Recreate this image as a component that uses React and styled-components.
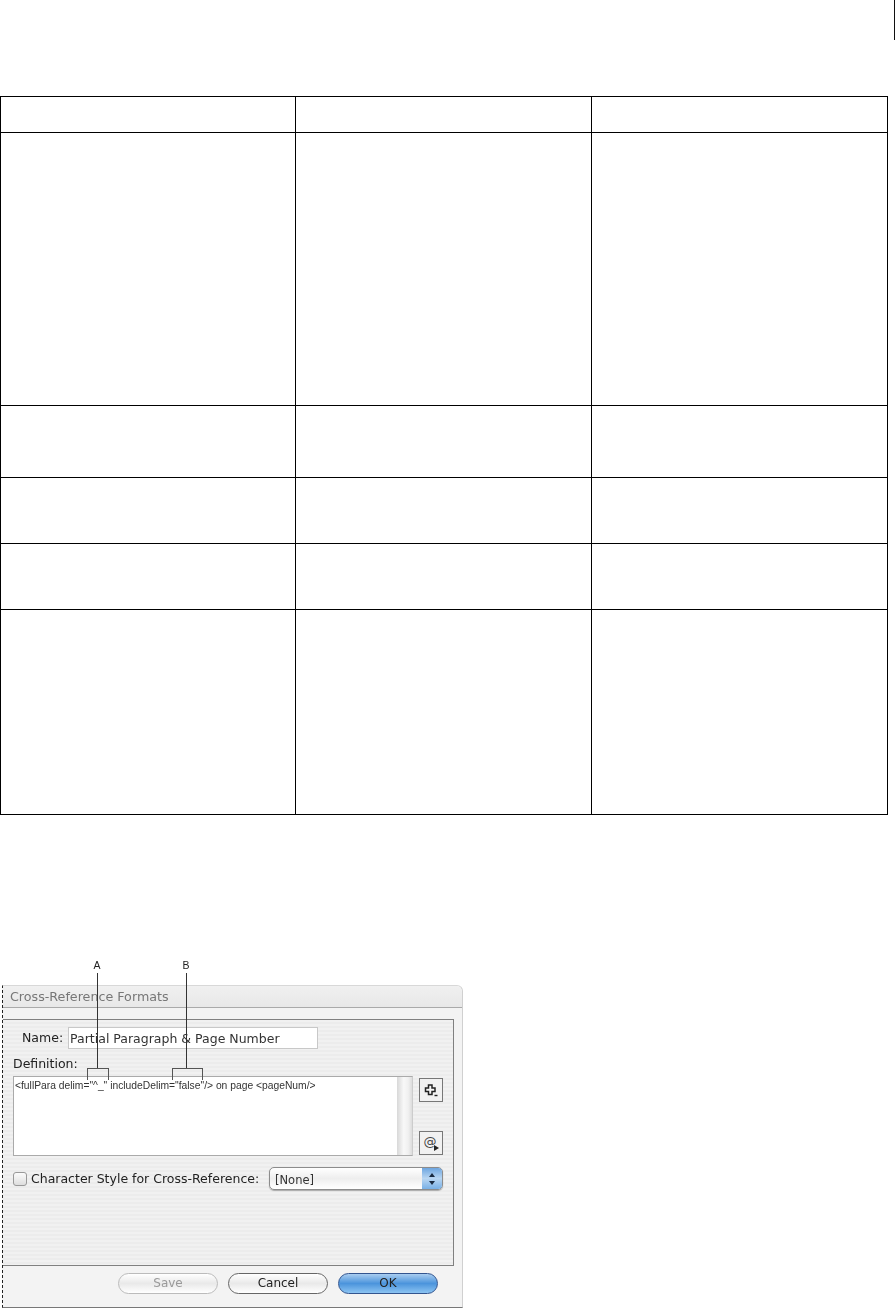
import React from 'react';
import styled, { createGlobalStyle } from 'styled-components';

const GlobalStyle = createGlobalStyle`
    html, body {
        margin: 0;
        padding: 0;
        background: #fff;
    }
    body {
        font-family: "DejaVu Sans", "Liberation Sans", sans-serif;
        color: #222;
    }
`;

const Page = styled.div`
    width: 895px;
    height: 1308px;
    overflow: hidden;
    background: #fff;
`;

const PageHeader = styled.div`
    height: 96px;
    display: flex;
    justify-content: flex-end;
    align-items: flex-start;
`;

const PageTick = styled.div`
    width: 1px;
    height: 40px;
    background: #111;
`;

const Table = styled.div`
    width: 888px;
    box-sizing: border-box;
    border: 1px solid #000;
    display: flex;
    flex-direction: column;
`;

const Row = styled.div`
    display: grid;
    grid-template-columns: 295px 296px 1fr;
    height: ${(p) => p.$height}px;
    box-sizing: border-box;
    border-bottom: ${(p) => (p.$last ? 'none' : '1px solid #000')};
`;

const Cell = styled.div`
    border-right: ${(p) => (p.$last ? 'none' : '1px solid #000')};
`;

const Figure = styled.div`
    position: relative;
    margin-top: 144px;
    width: 470px;
    height: 349px;
    filter: blur(0.45px);
`;

const CalloutLabel = styled.span`
    position: absolute;
    top: 1px;
    left: ${(p) => p.$x}px;
    font-family: "Liberation Sans", Arial, sans-serif;
    font-size: 10.5px;
    line-height: 10px;
    color: #222;
    transform: translateX(-50%);
`;

const CalloutLine = styled.div`
    position: absolute;
    top: 14px;
    left: ${(p) => p.$x}px;
    width: 1px;
    height: 96px;
    background: #333;
    z-index: 2;
`;

const CalloutBracket = styled.div`
    position: absolute;
    top: 109px;
    left: ${(p) => p.$x}px;
    width: ${(p) => p.$w}px;
    height: 12px;
    box-sizing: border-box;
    border: 1px solid #555;
    border-bottom: none;
    z-index: 2;
`;

const Window = styled.div`
    position: absolute;
    left: 2px;
    top: 26px;
    width: 461px;
    height: 323px;
    box-sizing: border-box;
    background: #f3f3f3;
    border-top: 1px solid #d8d8d8;
    border-right: 1px solid #d0d0d0;
    border-bottom: 1px solid #777;
    border-left: 1px dashed #222;
    border-top-right-radius: 6px;
    display: flex;
    flex-direction: column;
`;

const TitleBar = styled.div`
    height: 22px;
    flex: none;
    box-sizing: border-box;
    padding-left: 7px;
    border-bottom: 1px solid #aaa;
    background: linear-gradient(#f0f0f0, #e8e8e8);
    border-top-right-radius: 6px;
    font-size: 12.7px;
    line-height: 21px;
    color: #777;
`;

const Panel = styled.div`
    flex: none;
    height: 247px;
    width: 451px;
    margin-top: 11px;
    box-sizing: border-box;
    border: 1px solid #808080;
    border-left: none;
    background: repeating-linear-gradient(#f1f1f1 0, #f1f1f1 2px, #ececec 2px, #ececec 4px);
    padding: 7px 9px 0 10px;
    display: flex;
    flex-direction: column;
`;

const NameRow = styled.div`
    display: flex;
    align-items: center;
    height: 22px;
    padding-left: 9px;
    gap: 5px;
`;

const FieldLabel = styled.label`
    font-size: 12.5px;
    line-height: 16px;
    color: #222;
`;

const NameInput = styled.div`
    width: 250px;
    height: 22px;
    box-sizing: border-box;
    background: #fff;
    border: 1px solid #c8c8c8;
    padding-left: 1px;
    font-size: 12.5px;
    line-height: 21px;
    color: #333;
    white-space: nowrap;
`;

const DefinitionLabel = styled(FieldLabel)`
    display: block;
    margin-top: 7px;
`;

const DefinitionRow = styled.div`
    display: flex;
    margin-top: 4px;
    gap: 6px;
`;

const DefinitionBox = styled.div`
    width: 400px;
    height: 80px;
    box-sizing: border-box;
    background: #fff;
    border: 1px solid #aaa;
    border-right: 1px solid #ccc;
    display: flex;
    justify-content: space-between;
`;

const DefinitionText = styled.div`
    font-family: "Liberation Sans", Arial, sans-serif;
    font-size: 10.3px;
    line-height: 12px;
    padding: 3px 0 0 1px;
    color: #333;
    white-space: nowrap;
`;

const ScrollTrack = styled.div`
    width: 15px;
    background: linear-gradient(90deg, #d8d8d8, #f8f8f8 45%, #f0f0f0 75%, #dcdcdc);
`;

const SideButtons = styled.div`
    display: flex;
    flex-direction: column;
    justify-content: space-between;
    height: 77px;
    margin-top: 2px;
`;

const IconButton = styled.div`
    position: relative;
    width: 24px;
    height: 24px;
    box-sizing: border-box;
    border: 1px solid #777;
    background: #f1f1f1;
    display: flex;
    align-items: center;
    justify-content: center;
`;

const AtGlyph = styled.span`
    font-size: 13px;
    line-height: 20px;
    color: #444;
    margin: -2px 2px 0 0;
`;

const AtMarker = styled.svg`
    position: absolute;
    right: 3px;
    bottom: 3px;
`;

const StyleRow = styled.div`
    display: flex;
    align-items: center;
    margin-top: 11px;
    height: 23px;
`;

const Checkbox = styled.div`
    width: 14px;
    height: 14px;
    box-sizing: border-box;
    border: 1px solid #999;
    border-radius: 3px;
    background: linear-gradient(#fbfbfb, #dedede);
    margin-right: 4px;
`;

const StyleLabel = styled(FieldLabel)`
    white-space: nowrap;
    width: 238px;
`;

const Select = styled.div`
    width: 174px;
    height: 23px;
    box-sizing: border-box;
    border: 1px solid #8c8c8c;
    border-radius: 5px;
    background: linear-gradient(#fff, #eee 50%, #fff);
    display: flex;
    justify-content: space-between;
    overflow: hidden;
    box-shadow: 0 1px 1px #aaa;
`;

const SelectValue = styled.span`
    padding-left: 5px;
    font-size: 11.5px;
    line-height: 25px;
    color: #333;
`;

const SelectArrows = styled.div`
    width: 20px;
    background: linear-gradient(#6ea6e0, #b9d6f2 50%, #78b0e6);
    display: flex;
    align-items: center;
    justify-content: center;
`;

const ButtonBar = styled.div`
    display: flex;
    margin-top: 7px;
    padding-left: 115px;
    gap: 10px;
`;

const PillButton = styled.div`
    width: 100px;
    height: 21px;
    box-sizing: border-box;
    border-radius: 11px;
    border: 1px solid ${(p) => (p.$primary ? '#33558f' : p.$disabled ? '#bbb' : '#666')};
    background: ${(p) =>
        p.$primary
            ? 'linear-gradient(#a9cdf0, #4b94dc 50%, #8cc4f2)'
            : 'linear-gradient(#fff, #e9e9e9 50%, #fff)'};
    color: ${(p) => (p.$disabled ? '#999' : '#222')};
    font-size: 12px;
    line-height: 19px;
    text-align: center;
`;

const rows = [36, 273, 72, 66, 66, 204];

const App = () => {
    return (
        <Page>
            <GlobalStyle />
            <PageHeader>
                <PageTick />
            </PageHeader>
            <Table>
                {rows.map((height, i) => (
                    <Row key={i} $height={height} $last={i === rows.length - 1}>
                        <Cell />
                        <Cell />
                        <Cell $last />
                    </Row>
                ))}
            </Table>
            <Figure>
                <Window>
                    <TitleBar>Cross-Reference Formats</TitleBar>
                    <Panel>
                        <NameRow>
                            <FieldLabel>Name:</FieldLabel>
                            <NameInput>Partial Paragraph &amp; Page Number</NameInput>
                        </NameRow>
                        <DefinitionLabel>Definition:</DefinitionLabel>
                        <DefinitionRow>
                            <DefinitionBox>
                                <DefinitionText>
                                    {'<fullPara delim="^_" includeDelim="false"/> on page <pageNum/>'}
                                </DefinitionText>
                                <ScrollTrack />
                            </DefinitionBox>
                            <SideButtons>
                                <IconButton>
                                    <svg width="16" height="16" viewBox="0 0 16 16">
                                        <path d="M5.5 3h3.5v3h3v3.5H9v3H5.5v-3h-3V6h3z" fill="#f4f4f4" stroke="#222" strokeWidth="1.5" />
                                        <path d="M11.5 13.5h3" stroke="#222" strokeWidth="1.4" />
                                    </svg>
                                </IconButton>
                                <IconButton>
                                    <AtGlyph>@</AtGlyph>
                                    <AtMarker width="5" height="6" viewBox="0 0 5 6">
                                        <path d="M0 0l5 3-5 3z" fill="#222" />
                                    </AtMarker>
                                </IconButton>
                            </SideButtons>
                        </DefinitionRow>
                        <StyleRow>
                            <Checkbox />
                            <StyleLabel>Character Style for Cross-Reference:</StyleLabel>
                            <Select>
                                <SelectValue>[None]</SelectValue>
                                <SelectArrows>
                                    <svg width="8" height="14" viewBox="0 0 8 14" fill="#1a2a40">
                                        <path d="M4 1l3 4H1zM4 13l3-4H1z" />
                                    </svg>
                                </SelectArrows>
                            </Select>
                        </StyleRow>
                    </Panel>
                    <ButtonBar>
                        <PillButton $disabled>Save</PillButton>
                        <PillButton>Cancel</PillButton>
                        <PillButton $primary>OK</PillButton>
                    </ButtonBar>
                </Window>
                <CalloutLabel $x={97}>A</CalloutLabel>
                <CalloutLine $x={97} />
                <CalloutBracket $x={87} $w={22} />
                <CalloutLabel $x={186}>B</CalloutLabel>
                <CalloutLine $x={186} />
                <CalloutBracket $x={172} $w={31} />
            </Figure>
        </Page>
    );
};

export default App;
